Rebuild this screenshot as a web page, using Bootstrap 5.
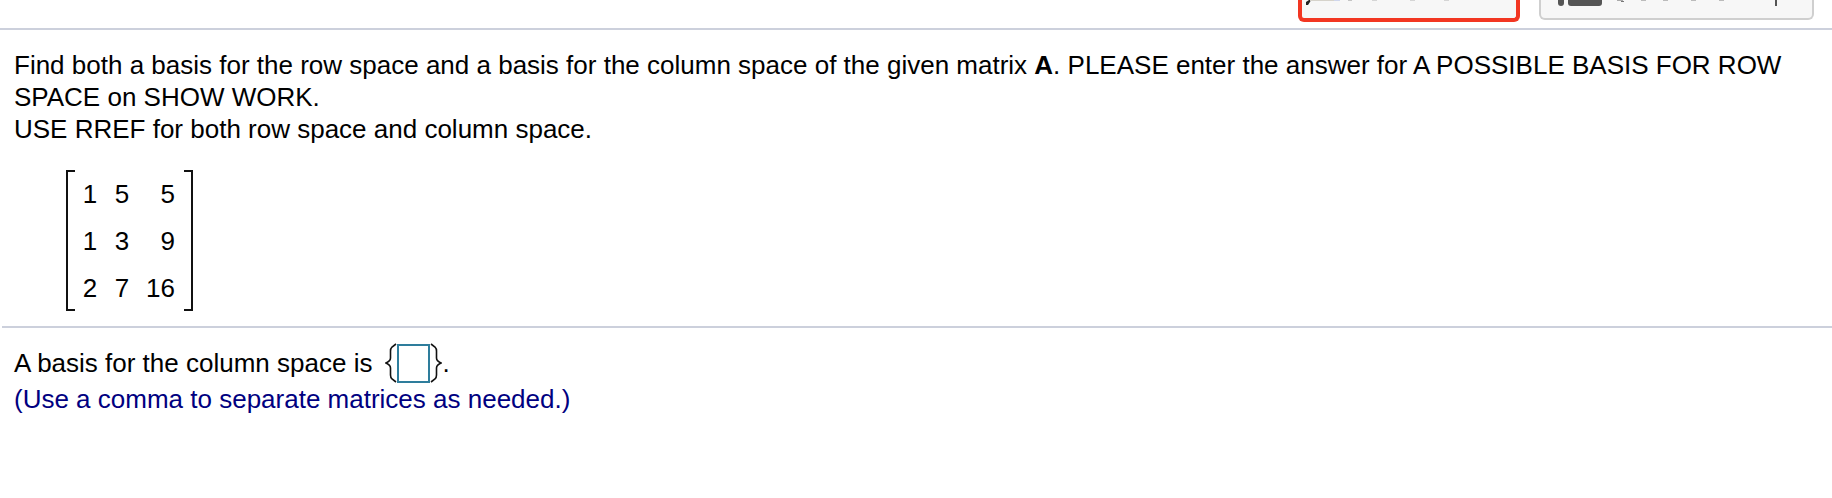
<!DOCTYPE html>
<html lang="en">
<head>
<meta charset="utf-8">
<title>Basis question</title>
<link rel="stylesheet" href="https://cdn.jsdelivr.net/npm/bootstrap@5.3.0/dist/css/bootstrap.min.css">
<style>
html, body { height: 100%; }
body { background: #fff; color: #000; font-family: "Liberation Sans", Arial, sans-serif; font-size: 26px; line-height: 32px; overflow: hidden; }
.topstrip { height: 28px; padding-right: 18px; overflow: hidden; }
.frag { display: block; background: #f7f7f7; border-radius: 0 0 6px 6px; }
.frag svg { display: block; }
.frag-red { width: 222px; height: 22px; border: 4px solid #f23622; border-top: 0; margin-right: 19px; }
.frag-grey { width: 275px; height: 20px; border: 2px solid #cfcfcf; border-top: 0; }
.rule-main { height: 2px; background: #ccd0dc; }
.question { padding: 19px 14px 0; }
.matrix-wrap { width: fit-content; margin: 25px 0 0 52px; }
.brk { width: 9px; height: 141px; border: 2px solid #111; }
.brk-l { border-right: 0; }
.brk-r { border-left: 0; }
.matrix-grid { display: grid; grid-template-columns: 30px 34px 45px; grid-template-rows: 47px 47px 47px; align-items: center; text-align: center; }
.matrix-grid span:nth-child(3n) { text-align: right; padding-right: 9px; }
.rule-sub { height: 2px; background: #ccd0dc; margin: 15px 0 0 2px; }
.answer { padding: 15px 14px 0; }
.answer-line { height: 40px; }
.curly { display: block; flex: none; }
.curly-l { margin-left: 13px; }
.answer-box { width: 33px; height: 39px; flex: none; border: 2px solid #2e7d9c; }
.hint { color: #000080; }
</style>
</head>
<body>
<div class="topstrip d-flex justify-content-end align-items-start">
  <div class="frag frag-red">
    <svg width="214" height="18" viewBox="0 0 214 18" aria-hidden="true">
      <path d="M4 5 L4 2 L7 0 L9 0 L8 2 L6 5 Z" fill="#222"/>
      <rect x="8" y="0" width="24" height="1" fill="#d6d3cb"/>
      <rect x="32" y="0" width="6" height="1" fill="#cfd6ec"/>
      <rect x="46" y="0" width="4" height="1" fill="#c5c5c5"/>
      <rect x="70" y="0" width="5" height="1" fill="#d5d5d5"/>
      <rect x="108" y="0" width="5" height="1" fill="#d5d5d5"/>
      <rect x="142" y="0" width="5" height="1" fill="#d5d5d5"/>
    </svg>
  </div>
  <div class="frag frag-grey">
    <svg width="271" height="18" viewBox="0 0 271 18" aria-hidden="true">
      <path d="M17 0 H23 V3 A3 3 0 0 1 17 3 Z" fill="#555"/>
      <path d="M27 0 H61 V3 A3 3 0 0 1 58 6 H30 A3 3 0 0 1 27 3 Z" fill="#555"/>
      <rect x="76" y="0" width="6" height="1" fill="#aaa"/>
      <rect x="80" y="1" width="3" height="1" fill="#777"/>
      <rect x="100" y="0" width="5" height="1" fill="#bbb"/>
      <rect x="122" y="0" width="5" height="1" fill="#bbb"/>
      <rect x="150" y="0" width="5" height="1" fill="#bbb"/>
      <rect x="178" y="0" width="5" height="1" fill="#bbb"/>
      <rect x="234" y="0" width="2" height="6" fill="#555"/>
    </svg>
  </div>
</div>
<div class="rule-main"></div>
<div class="question">
  <div>Find both a basis for the row space and a basis for the column space of the given matrix <b>A</b>. PLEASE enter the answer for A POSSIBLE BASIS FOR ROW SPACE on SHOW WORK.</div>
  <div>USE RREF for both row space and column space.</div>
  <div class="matrix-wrap d-flex">
    <div class="brk brk-l"></div>
    <div class="matrix-grid">
      <span>1</span><span>5</span><span>5</span>
      <span>1</span><span>3</span><span>9</span>
      <span>2</span><span>7</span><span>16</span>
    </div>
    <div class="brk brk-r"></div>
  </div>
</div>
<div class="rule-sub"></div>
<div class="answer">
  <div class="answer-line d-flex align-items-center">
    <span>A basis for the column space is</span>
    <svg class="curly curly-l" width="12" height="40" viewBox="0 0 12 40" aria-hidden="true"><path d="M11 1 L7 4 Q5.5 5.5 5.5 8 V15 Q5.5 18 1 20 Q5.5 22 5.5 25 V32 Q5.5 34.5 7 36 L11 39" fill="none" stroke="#111" stroke-width="1.6"/></svg>
    <span class="answer-box"></span>
    <svg class="curly" width="12" height="40" viewBox="0 0 12 40" aria-hidden="true"><path d="M1 1 L5 4 Q6.5 5.5 6.5 8 V15 Q6.5 18 11 20 Q6.5 22 6.5 25 V32 Q6.5 34.5 5 36 L1 39" fill="none" stroke="#111" stroke-width="1.6"/></svg>
    <span>.</span>
  </div>
  <div class="hint">(Use a comma to separate matrices as needed.)</div>
</div>
<script src="https://cdn.jsdelivr.net/npm/bootstrap@5.3.0/dist/js/bootstrap.bundle.min.js"></script>
</body>
</html>
